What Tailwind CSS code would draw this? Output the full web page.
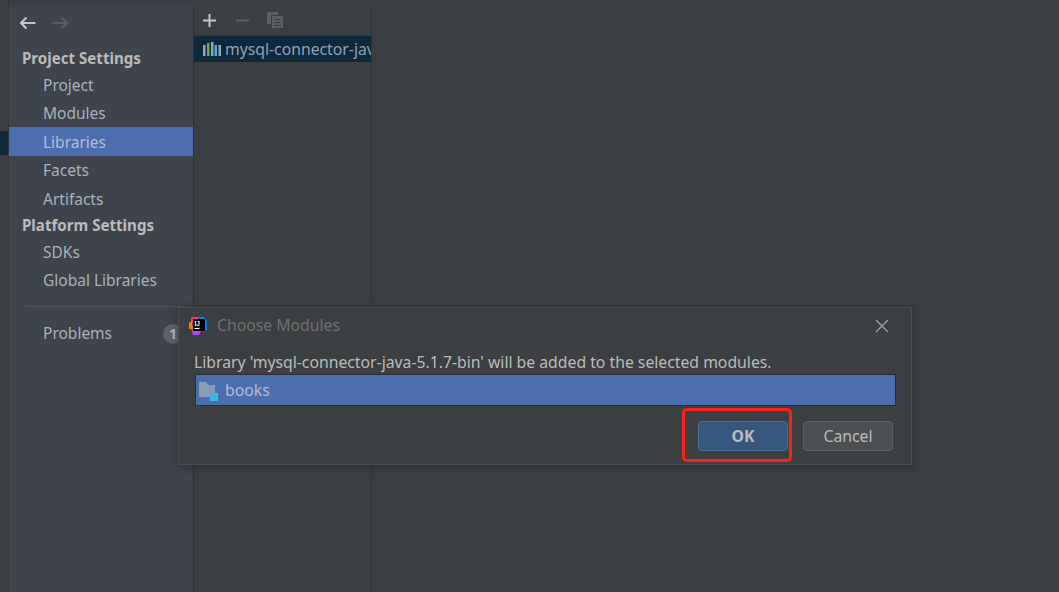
<!DOCTYPE html>
<html><head><meta charset="utf-8"><script src="https://cdn.jsdelivr.net/npm/@tailwindcss/browser@4"></script></head>
<body class="m-0 overflow-hidden">
<div class="relative flex w-[1059px] h-[592px] bg-[#3c3f41] overflow-hidden font-['Noto_Sans',sans-serif] text-[15.75px] text-[#bbbbbb]">
  <!-- left strip -->
  <div class="w-[9px] shrink-0 pt-[131px] border-r border-[#353739]">
    <div class="w-[8px] h-[24px] bg-[#0d293e]"></div>
  </div>
  <!-- sidebar -->
  <nav class="w-[184px] shrink-0 mt-[5px] bg-[#3e434c] flex flex-col text-[15.5px]">
    <div class="flex items-center gap-[16px] pl-[10px] h-[36px]">
      <svg width="17" height="14" viewBox="0 0 17 14" fill="none" stroke="#c4c4c4" stroke-width="2.200"><path d="M16.500 7H2M7.500 1.500 2 7l5.500 5.500"/></svg>
      <svg width="17" height="14" viewBox="0 0 17 14" fill="none" stroke="#5a5d5f" stroke-width="2.200"><path d="M0.500 7H15M9.500 1.500 15 7l-5.500 5.500"/></svg>
    </div>
    <div class="h-[26px] mt-[4px] pl-[13px] flex items-center font-bold text-[15.1px] text-[#bbbbbb]">Project Settings</div>
    <div class="h-[28px] pt-px pl-[34px] flex items-center text-[#a9b2bc]">Project</div>
    <div class="h-[28px] pt-px pl-[34px] flex items-center text-[#a9b2bc]">Modules</div>
    <div class="h-[29px] pt-[2px] pl-[34px] flex items-center bg-[#4b6eaf] text-[#b4bdc9]">Libraries</div>
    <div class="h-[28px] pt-px pl-[34px] flex items-center text-[#a9b2bc]">Facets</div>
    <div class="h-[29px] pt-[2px] pl-[34px] flex items-center text-[#a9b2bc]">Artifacts</div>
    <div class="h-[25px] pl-[13px] flex items-center font-bold text-[15.1px] text-[#bbbbbb]">Platform Settings</div>
    <div class="h-[28px] pt-px pl-[34px] flex items-center text-[#a9b2bc]">SDKs</div>
    <div class="h-[28px] pt-px pl-[34px] flex items-center text-[#a9b2bc]">Global Libraries</div>
    <div class="h-px mt-[12px] ml-[17px] mr-[8px] bg-[#50545a]"></div>
    <div class="h-[28px] pt-px mt-[12px] pl-[34px] pr-[10px] flex items-center justify-between text-[#a9b2bc]">
      <span>Problems</span>
      <span class="w-[20px] h-[20px] rounded-full bg-[#5c616b] flex items-center justify-center font-bold text-[#aeb4bc] text-[14px]">1</span>
    </div>
  </nav>
  <!-- library list -->
  <section class="w-[179px] shrink-0 mt-[5px] border-l border-l-[#323232] border-r border-r-[#323232] flex flex-col">
    <div class="h-[31px] flex items-center pl-[9px] border-b border-[#343638]">
      <svg width="13" height="13" viewBox="0 0 13 13" fill="none" stroke="#c4c4c4" stroke-width="2"><path d="M0 6.500h13M6.500 0v13"/></svg>
      <svg width="13" height="13" viewBox="0 0 13 13" fill="none" stroke="#5c5f61" stroke-width="2" class="ml-[20px]"><path d="M0 6.500h13"/></svg>
      <svg width="16" height="16" viewBox="0 0 16 16" class="-mt-[1px] ml-[18px]" fill="#5c5f61"><path d="M0 0h11v3H4v9H0zM5 4h11v12H5zM7 7v1h7V7zM7 10v1h7v-1zM7 13v1h7v-1z" fill-rule="evenodd"/></svg>
    </div>
    <div class="h-[26px] pt-[2px] bg-[#0d293e] flex items-center pl-[9px] gap-[4px] overflow-hidden whitespace-nowrap text-[#8fa3b5]">
      <svg width="18" height="14" viewBox="0 0 18 14" class="shrink-0 -mt-[2px]"><path fill="#9aa7b0" d="M0 3h2.500v11H0z"/><path fill="#62b543" d="M4 1h2.500v13H4z"/><path fill="#9aa7b0" d="M8 0h2.500v14H8z"/><path fill="#40b6e0" d="M11.500 3H14v11h-2.500z"/><path fill="#9aa7b0" d="M15.500 3H18v11h-2.500z"/></svg>
      <span>mysql-connector-java-5.1.7-bin</span>
    </div>
  </section>
  <main class="flex-1"></main>
  <!-- dialog -->
  <div class="absolute left-[178px] top-[307px] w-[734px] h-[158px] bg-[#3c3f41] border border-[#4a4d4f] shadow-[0_2px_10px_rgba(0,0,0,0.25)] flex flex-col">
    <div class="h-[36px] flex items-center pl-[10px] pr-[22px] shrink-0">
      <svg width="18" height="18" viewBox="0 0 18 18" class="shrink-0">
        <path fill="#fe315d" d="M2 0h8l-2 6H2z"/><path fill="#f97a12" d="M0 6l3-2 1 8H0z"/><path fill="#087cfa" d="M10 0h5l3 4v9l-4 2z"/><path fill="#b345f1" d="M2 12h11l-3 6H4z"/>
        <rect x="4" y="2" width="12" height="12" fill="#000"/>
        <text x="5.500" y="8.500" font-size="6.500" font-weight="700" fill="#fff" font-family="Liberation Sans">IJ</text>
        <rect x="5.500" y="11" width="5" height="1" fill="#fff"/>
      </svg>
      <span class="ml-[10px] text-[#6e7072]">Choose Modules</span>
      <svg width="14" height="14" viewBox="0 0 14 14" class="ml-auto" fill="none" stroke="#a0a2a4" stroke-width="1.300"><path d="M1 1l12 12M13 1 1 13"/></svg>
    </div>
    <p class="h-[25px] mt-[7px] pl-[15px] leading-[23px] text-[#bbbbbb]">Library 'mysql-connector-java-5.1.7-bin' will be added to the selected modules.</p>
    <div class="ml-[16px] mr-[15px] h-[32px] bg-[#4b6eaf] border border-[#2b2d2f] flex items-center pl-[3px] gap-[7px] text-[#b4bdc9] -mt-[2px]">
      <svg width="19" height="19" viewBox="0 0 19 19" class="mt-[3px] shrink-0"><path fill="#8b9cb3" d="M0 0h7l2 3h7v12H0z"/><rect x="11" y="11" width="8" height="8" fill="#3fb5e6"/></svg>
      <span class="pt-px">books</span>
    </div>
    <div class="flex justify-end gap-[15px] pr-[18px] mt-[15px]">
      <button class="relative w-[90px] h-[30px] pt-px rounded-[4px] bg-[#365880] border border-[#4c708c] font-bold text-[#bbbbbb]">OK
        <span class="absolute -left-[17px] -top-[14px] w-[110px] h-[54px] rounded-[5px] border-[3px] border-[#ff2015]"></span>
      </button>
      <button class="w-[90px] h-[30px] pt-px rounded-[4px] bg-[#4c5052] border border-[#5e6060] text-[#bbbbbb]">Cancel</button>
    </div>
  </div>
</div>
</body></html>
